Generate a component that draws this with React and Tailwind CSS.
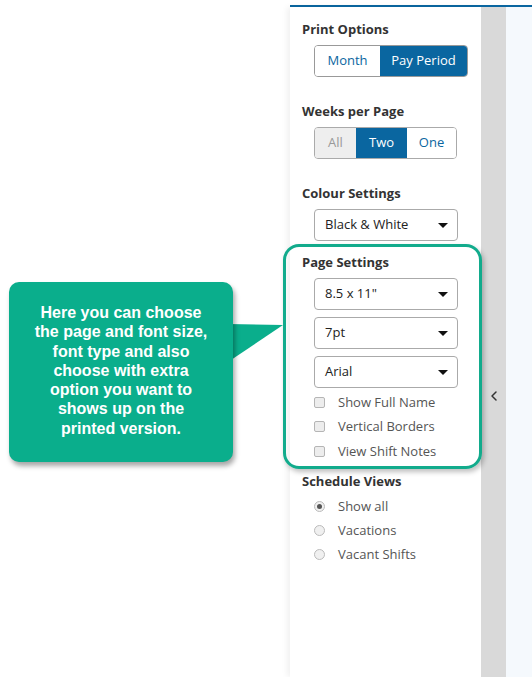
import { ChevronLeft } from 'lucide-react'

const font = { fontFamily: '"Open Sans", "Liberation Sans", sans-serif' }

function Heading({ children, className = '' }) {
  return <div className={`text-[13px] leading-[18px] font-bold text-[#333] ${className}`}>{children}</div>
}

function Select({ value, className = '' }) {
  return (
    <div className={`ml-3 w-[144px] h-[32px] border border-[#aaa] rounded-[4px] bg-white flex items-center justify-between pl-[10px] pr-[9px] text-[13px] text-[#222] ${className}`}>
      <span>{value}</span>
      <span className="w-0 h-0 border-l-[5px] border-r-[5px] border-t-[5px] border-l-transparent border-r-transparent border-t-[#111]" />
    </div>
  )
}

function Check({ label }) {
  return (
    <div className="ml-3 h-[24.5px] flex items-center gap-[13px] text-[13px] text-[#555]">
      <span className="w-[11px] h-[11px] rounded-[2px] border border-[#b5b5b5] bg-[#ededed]" />
      <span>{label}</span>
    </div>
  )
}

function Radio({ label, checked }) {
  return (
    <div className="ml-3 h-[24px] flex items-center gap-[13px] text-[13px] text-[#555]">
      <span className="w-[11px] h-[11px] rounded-full border border-[#bbb] bg-[#f0f0f0] flex items-center justify-center">
        {checked && <span className="w-[5px] h-[5px] rounded-full bg-[#555]" />}
      </span>
      <span>{label}</span>
    </div>
  )
}

export default function App() {
  return (
    <div className="relative w-[532px] h-[677px] bg-white flex overflow-hidden" style={font}>
      {/* left blank area */}
      <div className="w-[290px] shrink-0" />

      {/* right app area */}
      <div className="flex-1 flex flex-col pt-[5px]">
        <div className="flex-1 flex border-t-2 border-[#0a66a0]">
          {/* sidebar */}
          <div className="w-[191px] shrink-0 bg-white pl-3 pt-[13px] shadow-[-3px_0_6px_rgba(0,0,0,0.06)]">
            <Heading>Print Options</Heading>
            <div className="ml-3 mt-[7px] w-[154px] h-[32px] flex rounded-[4px] border border-[#999] overflow-hidden text-[13px]">
              <div className="w-[65px] flex items-center justify-center text-[#0a66a0] bg-white">Month</div>
              <div className="flex-1 flex items-center justify-center text-white bg-[#0a66a0]">Pay Period</div>
            </div>

            <Heading className="mt-[25px]">Weeks per Page</Heading>
            <div className="ml-3 mt-[7px] w-[143px] h-[32px] flex rounded-[4px] border border-[#aaa] overflow-hidden text-[13px]">
              <div className="w-[41px] flex items-center justify-center text-[#999] bg-[#eee]">All</div>
              <div className="w-[51px] flex items-center justify-center text-white bg-[#0a66a0]">Two</div>
              <div className="flex-1 flex items-center justify-center text-[#0a66a0] bg-white">One</div>
            </div>

            <Heading className="mt-[25px]">Colour Settings</Heading>
            <Select value="Black & White" className="mt-[7px]" />

            <Heading className="mt-[12px]">Page Settings</Heading>
            <Select value={'8.5 x 11"'} className="mt-[7px]" />
            <Select value="7pt" className="mt-[7px]" />
            <Select value="Arial" className="mt-[7px]" />
            <div className="mt-[2px]">
              <Check label="Show Full Name" />
              <Check label="Vertical Borders" />
              <Check label="View Shift Notes" />
            </div>

            <Heading className="mt-[8px]">Schedule Views</Heading>
            <div className="mt-[5px]">
              <Radio label="Show all" checked />
              <Radio label="Vacations" />
              <Radio label="Vacant Shifts" />
            </div>
          </div>

          {/* collapse strip */}
          <div className="w-[25px] shrink-0 bg-[#d9d9d9] flex justify-center pt-[381px]">
            <ChevronLeft size={16} strokeWidth={2.25} className="text-[#333]" />
          </div>

          {/* main area */}
          <div className="flex-1 bg-[#f5f9fd]" />
        </div>
      </div>

      {/* highlight box around Page Settings */}
      <div className="absolute left-[283px] top-[244px] w-[199px] h-[225px] border-[3px] border-[#12ab8c] rounded-[16px] shadow-[2px_3px_5px_rgba(0,0,0,0.25)]" />

      {/* callout */}
      <svg className="absolute left-[228px] top-[322px]" width="60" height="42" viewBox="0 0 60 42">
        <polygon points="0,2 55,3 0,40" fill="#0aae8c" />
      </svg>
      <div
        className="absolute left-[9px] top-[282px] w-[224px] h-[180px] rounded-[10px] bg-[#0aae8c] shadow-[2px_4px_5px_rgba(0,0,0,0.35)] flex items-center justify-center px-2 pb-[3px]"
        style={{ fontFamily: '"Liberation Sans", Arial, sans-serif' }}
      >
        <p className="text-white font-bold text-[16px] leading-[19.3px] text-center">
          Here you can choose<br />
          the page and font size,<br />
          font type and also<br />
          choose with extra<br />
          option you want to<br />
          shows up on the<br />
          printed version.
        </p>
      </div>
    </div>
  )
}
